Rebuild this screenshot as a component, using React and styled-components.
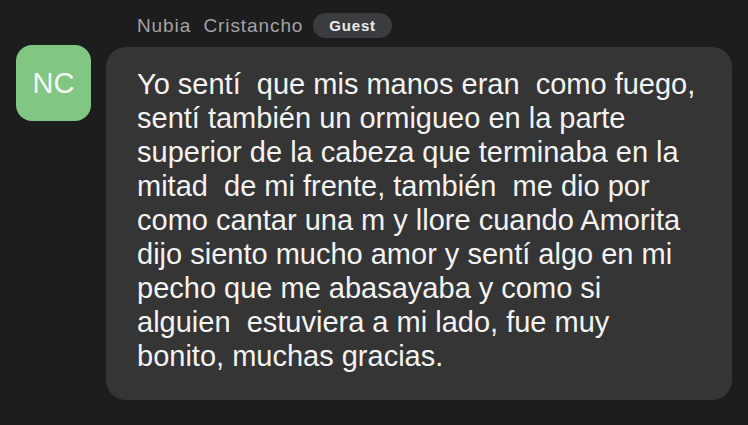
import React from 'react'
import styled, { createGlobalStyle } from 'styled-components'

const GlobalStyle = createGlobalStyle`
	html, body {
		margin: 0;
		padding: 0;
		background: #1d1d1e;
	}
	body {
		font-family: 'Liberation Sans', Arial, sans-serif;
		width: 748px;
		height: 425px;
		overflow: hidden;
	}
`

const lines = [
	'Yo sentí  que mis manos eran  como fuego,',
	'sentí también un ormigueo en la parte',
	'superior de la cabeza que terminaba en la',
	'mitad  de mi frente, también  me dio por',
	'como cantar una m y llore cuando Amorita',
	'dijo siento mucho amor y sentí algo en mi',
	'pecho que me abasayaba y como si',
	'alguien  estuviera a mi lado, fue muy',
	'bonito, muchas gracias.',
]

const App = () => {
	return (
		<>
			<GlobalStyle />
			<Page>
				<Header>
					<Name>Nubia&nbsp; Cristancho</Name>
					<Badge>Guest</Badge>
				</Header>
				<Row>
					<Avatar>NC</Avatar>
					<Bubble>
						{lines.map((l, i) => (
							<Line key={i}>{l}</Line>
						))}
					</Bubble>
				</Row>
			</Page>
		</>
	)
}

export default App

const Page = styled.div`
	display: flex;
	flex-direction: column;
	padding: 13px 16px 0 16px;
	gap: 9px;
`

const Header = styled.div`
	display: flex;
	align-items: center;
	gap: 10px;
	padding-left: 121px;
	height: 25px;
`

const Name = styled.span`
	color: #a3a3a5;
	font-size: 19px;
	letter-spacing: 0.9px;
`

const Badge = styled.span`
	background: #3b3c3f;
	color: #ececec;
	font-weight: bold;
	font-size: 15px;
	letter-spacing: 0.8px;
	height: 25px;
	padding: 0 16px;
	border-radius: 13px;
	display: flex;
	align-items: center;
`

const Row = styled.div`
	display: flex;
	align-items: flex-start;
	gap: 15px;
`

const Avatar = styled.div`
	width: 75px;
	height: 76px;
	flex-shrink: 0;
	border-radius: 16px;
	background: #82c684;
	color: #f4faf3;
	font-size: 29px;
	display: flex;
	align-items: center;
	justify-content: center;
	margin-top: -2px;
`

const Bubble = styled.div`
	flex: 1;
	background: #353536;
	border-radius: 20px;
	padding: 20px 20px 27px 31px;
	color: #f3f3f3;
	font-size: 29px;
	line-height: 34px;
`

const Line = styled.div`
	white-space: pre;
`
